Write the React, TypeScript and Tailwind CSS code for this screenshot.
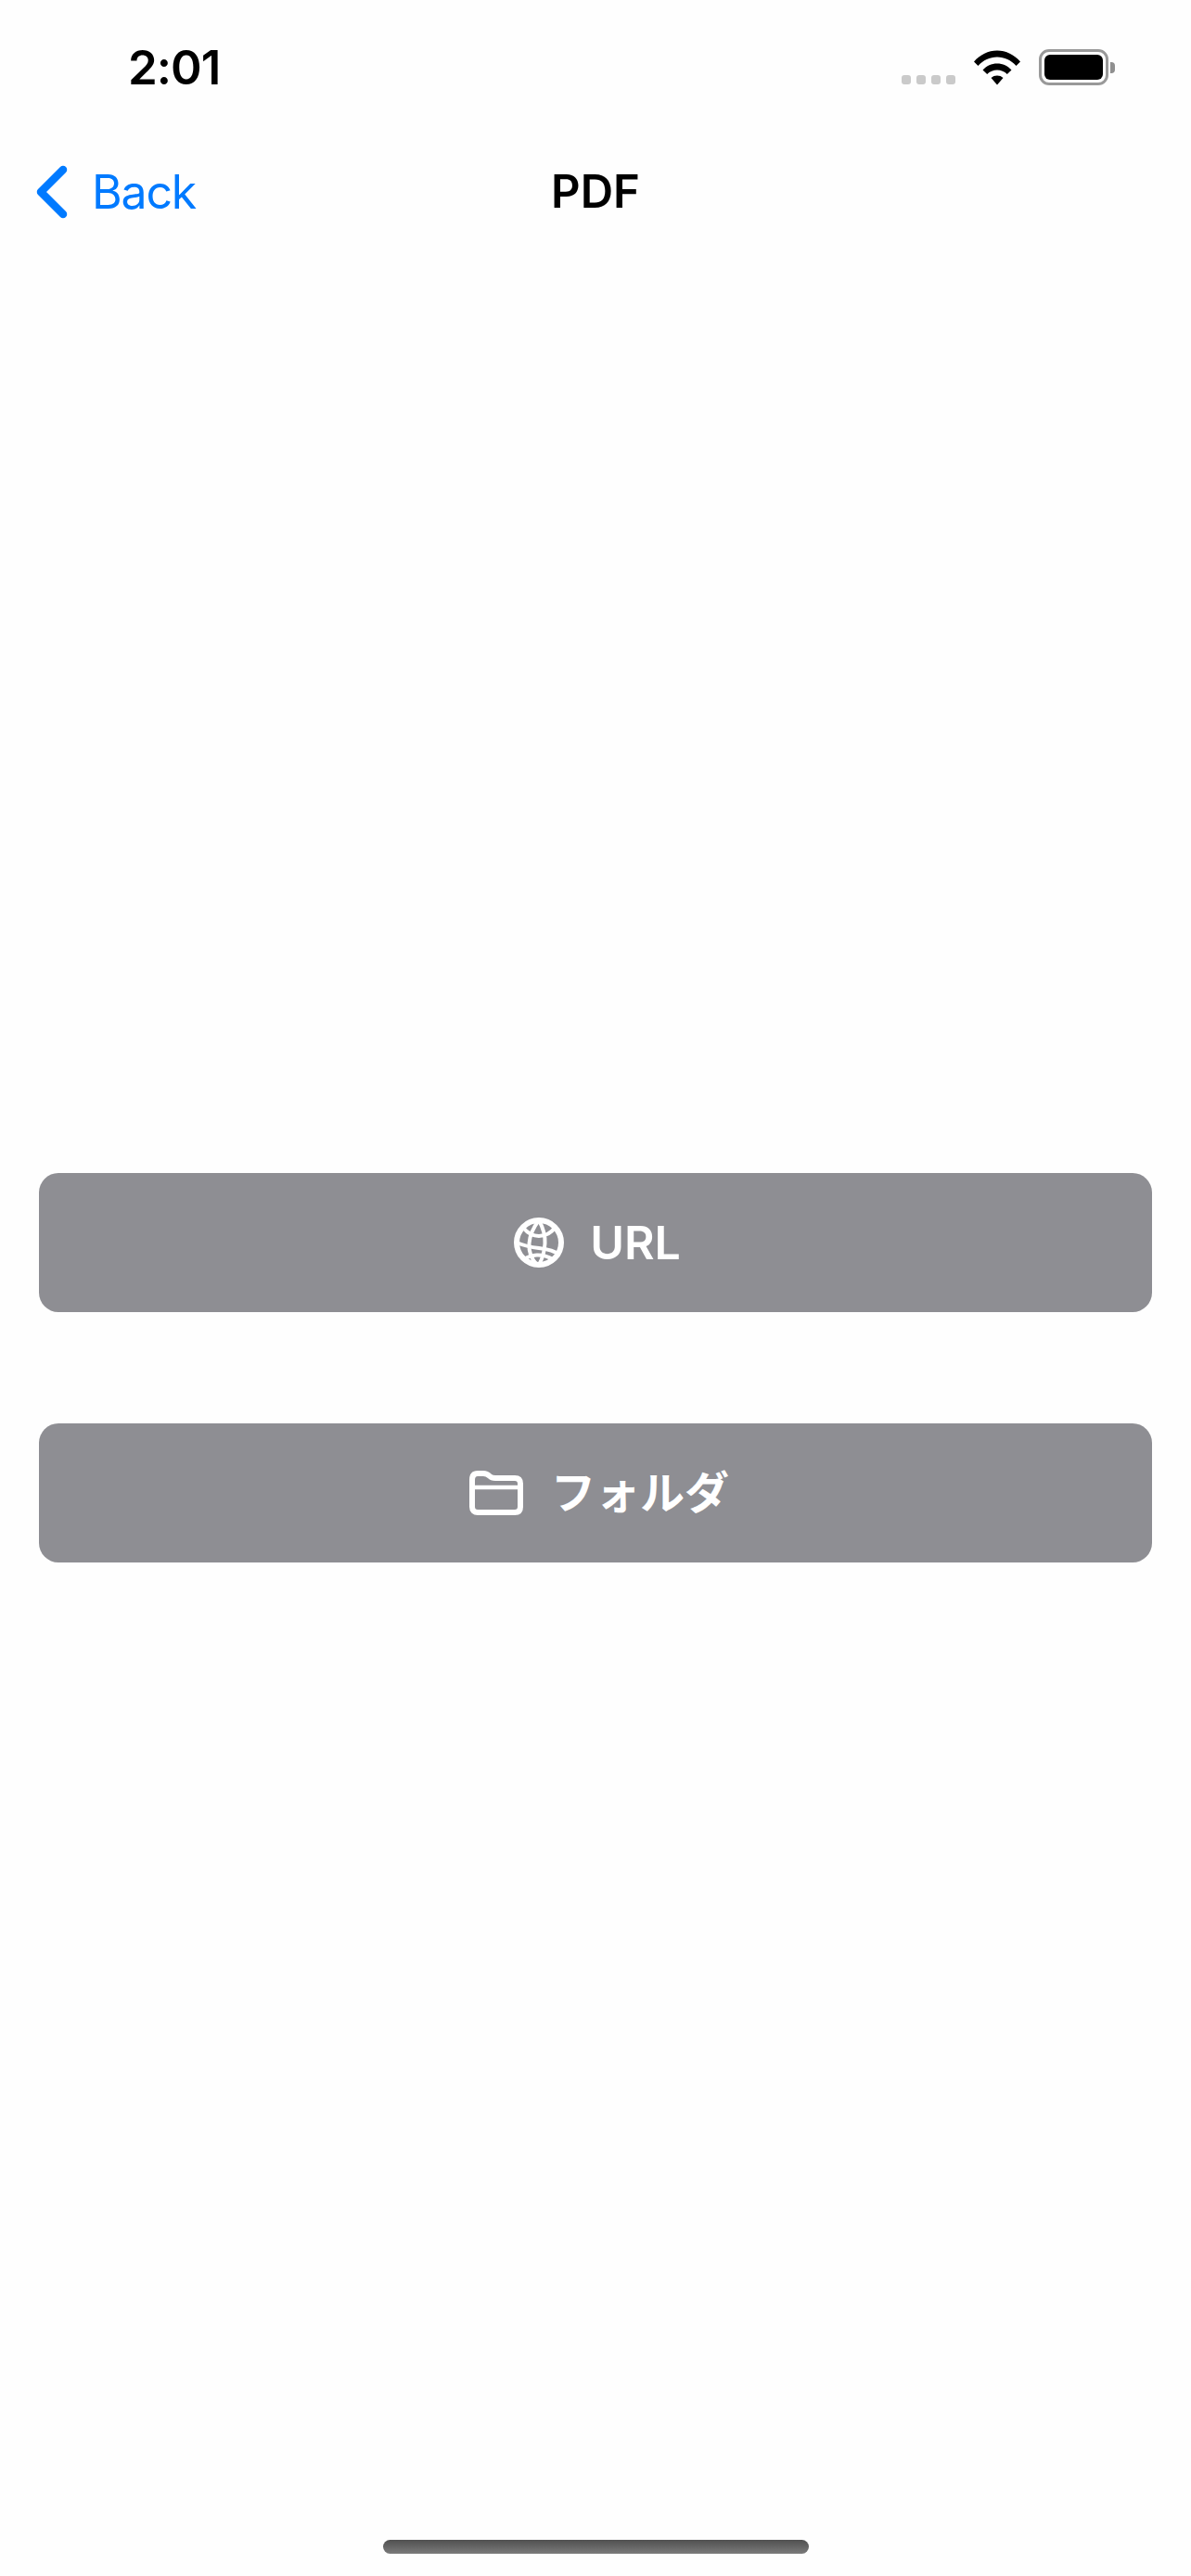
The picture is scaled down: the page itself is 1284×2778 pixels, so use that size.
function Wifi() {
  return (
    <svg width="50" height="38" viewBox="0 0 50 38" className="block">
      <path d="M0 12.5C6.5 5 15.5 0.5 25 0.5S43.5 5 50 12.5L45.5 17C40 11 33 7.5 25 7.5S10 11 4.500 17Z" fill="#000" />
      <path d="M9.500 21.500C13.500 17 19 14.500 25 14.500S36.500 17 40.500 21.500L35.800 26C33 23 29 21.500 25 21.500S17 23 14.200 26Z" fill="#000" />
      <path d="M18.500 30C20.300 28.300 22.500 27.500 25 27.500S29.700 28.300 31.500 30L25 37.500Z" fill="#000" />
    </svg>
  );
}

function Globe() {
  return (
    <svg width="54" height="54" viewBox="0 0 54 54" fill="none" stroke="#fff" className="block">
      <circle cx="27" cy="27" r="24" strokeWidth="6" />
      <path d="M27 3C20 12 17 20 16.500 28C16 36 19 45 25 51" strokeWidth="4" />
      <path d="M27 3C32 12 34 20 33.500 28C33 36 31 44 27 51" strokeWidth="4" />
      <path d="M10 11C15 17 22 20 27 20C33 20 40 17 45 10" strokeWidth="4" />
      <path d="M3 27C10 30 18 32 27 33C35 34 44 36 49 40" strokeWidth="4" />
      <path d="M11 45C18 40 30 38 42 45" strokeWidth="4" />
    </svg>
  );
}

function FolderIcon() {
  return (
    <svg width="58" height="48" viewBox="0 0 58 48" fill="none" stroke="#fff" strokeWidth="6" strokeLinejoin="round" className="block">
      <path d="M3 10C3 5 5.500 3 9 3H15C18 3 20 4 22 6C24 8 25.500 8 28 8H49C53 8 55 10 55 14V39C55 43 53 45 49 45H9C5.500 45 3 43 3 39Z" />
      <path d="M3 18H55" strokeWidth="4.500" />
    </svg>
  );
}

export default function App() {
  return (
    <div className="w-[1284px] h-[2778px] bg-[#fefefe] flex flex-col font-['Inter','Noto_Sans_CJK_JP',sans-serif]">
      {/* status bar */}
      <div className="h-[151px] pt-[43px] pl-[138px] pr-[82px] flex items-start justify-between">
        <div className="text-[51px] leading-[60px] font-semibold text-black tracking-[-1px]">2:01</div>
        <div className="flex items-end gap-[20px] pt-[10px]">
          <div className="flex gap-[6px] mb-[1px]">
            <div className="w-[10px] h-[10px] rounded-[3px] bg-[#cacaca]" />
            <div className="w-[10px] h-[10px] rounded-[3px] bg-[#cacaca]" />
            <div className="w-[10px] h-[10px] rounded-[3px] bg-[#cacaca]" />
            <div className="w-[10px] h-[10px] rounded-[3px] bg-[#cacaca]" />
          </div>
          <Wifi />
          <div className="flex items-center">
            <div className="w-[75px] h-[39px] rounded-[11px] border-[3px] border-[#999999] p-[3px]">
              <div className="w-full h-full rounded-[6px] bg-black" />
            </div>
            <div className="w-[5px] h-[12px] rounded-r-[4px] bg-[#8f8f8f] ml-[2px]" />
          </div>
        </div>
      </div>

      {/* nav bar */}
      <div className="h-[112px] relative flex items-center justify-center">
        <div className="absolute left-[38px] top-[26px] flex items-center gap-[25px]">
          <svg width="36" height="60" viewBox="0 0 36 60" fill="none" stroke="#007aff" strokeWidth="8.500" strokeLinecap="round" strokeLinejoin="round" className="block">
            <path d="M30 6L6 30L30 54" />
          </svg>
          <span className="text-[50px] leading-[60px] text-[#007aff] tracking-[-1.2px]">Back</span>
        </div>
        <span className="text-[49px] leading-[60px] font-semibold text-black">PDF</span>
      </div>

      {/* buttons */}
      <div className="flex-1 px-[42px] pt-[1002px] flex flex-col gap-[120px]">
        <button className="h-[150px] rounded-[21px] bg-[#8e8e93] pl-[4px] flex items-center justify-center gap-[28px] text-white text-[50px] font-semibold">
          <Globe />
          <span>URL</span>
        </button>
        <button className="h-[150px] rounded-[21px] bg-[#8e8e93] pl-[8px] flex items-center justify-center gap-[30px] text-white text-[48px] font-bold">
          <FolderIcon />
          <span>フォルダ</span>
        </button>
      </div>

      {/* home indicator */}
      <div className="h-[39px] flex justify-center">
        <div className="w-[459px] h-[15px] rounded-full bg-gradient-to-b from-[#505050] to-[#7b7b7b]" />
      </div>
    </div>
  );
}
